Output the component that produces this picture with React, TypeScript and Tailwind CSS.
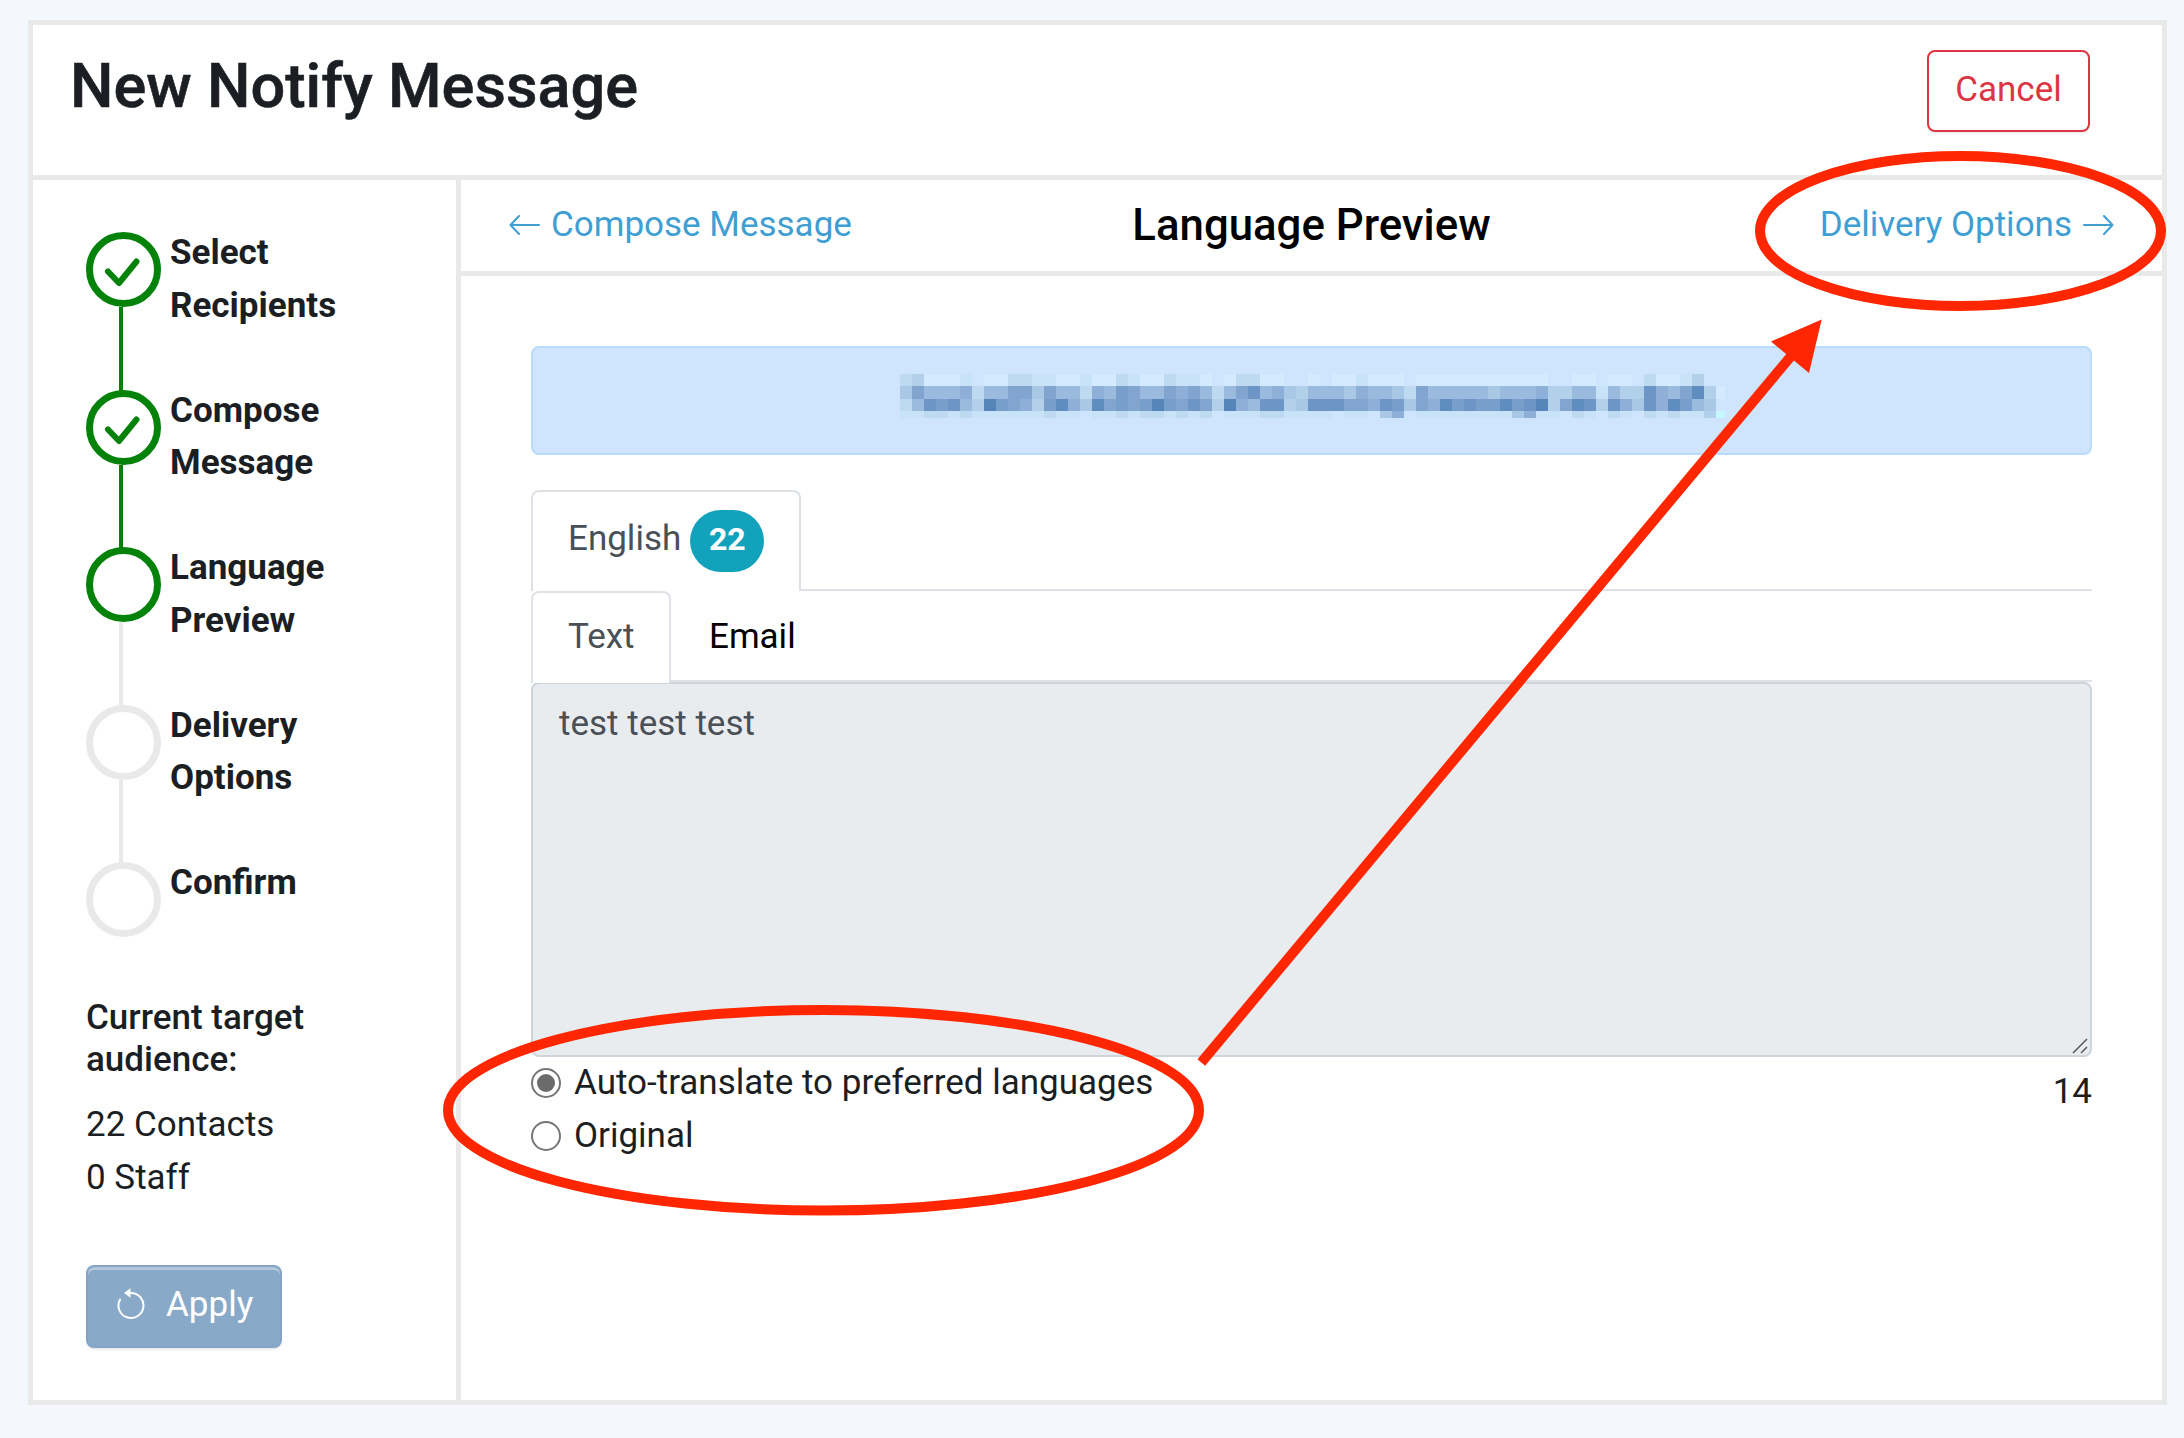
import { Fragment } from "react"

interface Step {
    id: number
    lines: string[]
    status: "done" | "current" | "pending"
}

const steps: Step[] = [
    { id: 1, lines: ["Select", "Recipients"], status: "done" },
    { id: 2, lines: ["Compose", "Message"], status: "done" },
    { id: 3, lines: ["Language", "Preview"], status: "current" },
    { id: 4, lines: ["Delivery", "Options"], status: "pending" },
    { id: 5, lines: ["Confirm"], status: "pending" },
]

// Censored alert text, one character per mosaic block ("." is empty)
const mosaicRows = [
    { y: 0, height: 12.4, cells: "341112.1133221121132113221.13311..1.112111.11111111111..11.11.31124.." },
    { y: 12.4, height: 12.3, cells: "5866673668858663769866878636" + "8A6754" + "6665766538666665666744662644A768B41" },
    { y: 24.7, height: 12.3, cells: "36A9A64C98749B75B8989C98A84C76AA45" + "AAA887A9587B9A99B9AC48BA4A75A7B965." },
    { y: 37, height: 7, cells: "223323222222322.22323323" + "23.2223322" + "22.22.57.222222225722.32.32.323224D" },
]

const mosaicColors: Record<string, string> = {
    "1": "#d4ebff",
    "2": "#c8e2f8",
    "3": "#bddaf0",
    "4": "#b2d0ea",
    "5": "#a8c8e5",
    "6": "#9abade",
    "7": "#8eafd8",
    "8": "#82a5d0",
    "9": "#789fcb",
    A: "#6d96c6",
    B: "#608dc0",
    C: "#5686b9",
    D: "#c5f7ff",
}

const Mosaic = () => (
    <svg width="828" height="44" viewBox="0 0 828 44" shapeRendering="crispEdges">
        {mosaicRows.map((row) => (
            <Fragment key={row.y}>
                {row.cells.split("").map((cell, i) =>
                    cell === "." ? null : (
                        <rect
                            key={i}
                            x={i * 12}
                            y={row.y}
                            width={i === 68 ? 9 : 12}
                            height={row.height}
                            fill={mosaicColors[cell]}
                        />
                    )
                )}
            </Fragment>
        ))}
    </svg>
)

const StepItem = ({ step, last }: { step: Step; last: boolean }) => (
    <li className={`flex gap-[9px] ${last ? "h-[105px]" : "h-[157.5px]"}`}>
        <div className="flex flex-col w-[75px] pt-[5px]">
            <div
                className={`w-[75px] h-[75px] shrink-0 rounded-full border-[7px] flex items-center justify-center ${step.status === "pending" ? "border-[#e9e9e9]" : "border-[#04820a]"
                    }`}
            >
                {step.status === "done" && (
                    <svg width="61" height="61" viewBox="0 0 61 61" fill="none">
                        <path
                            d="M15 32.5 L26 44 L43.5 22.5"
                            stroke="#04820a"
                            strokeWidth="6"
                            strokeLinecap="round"
                            strokeLinejoin="round"
                        />
                    </svg>
                )}
            </div>
            {!last && (
                <div
                    className={`w-1 h-[84px] shrink-0 ml-[33px] ${step.status === "done" ? "bg-[#04820a]" : "bg-[#e9e9e9]"
                        }`}
                />
            )}
        </div>
        <div className="font-bold leading-[52.5px]">
            {step.lines.map((line) => (
                <div key={line}>{line}</div>
            ))}
        </div>
    </li>
)

const Sidebar = () => (
    <aside className="w-[428px] shrink-0 border-r-[5px] border-[#e9e9e9] pl-[53px] pt-[47px]">
        <ol>
            {steps.map((step, i) => (
                <StepItem key={step.id} step={step} last={i === steps.length - 1} />
            ))}
        </ol>

        {/* Audience */}
        <h2 className="mt-[35px] font-medium leading-[42px]">
            Current target
            <br />
            audience:
        </h2>
        <p className="mt-[18px] leading-[52.5px]">22 Contacts</p>
        <p className="leading-[52.5px]">0 Staff</p>

        <button className="mt-[61px] w-[196px] h-[83px] flex items-center pl-[29px] pb-[3px] rounded-lg border-2 border-[#85a4c5] bg-[#89a9c9] text-white shadow-[inset_0_3px_0_rgba(255,255,255,0.35),0_2px_2px_rgba(0,0,0,0.08)]">
            <svg className="mb-1" width="28" height="34" viewBox="0 0 28 34" fill="none">
                <path d="M3 13.5 A12.5 12.5 0 1 0 14 7" stroke="white" strokeWidth="2" strokeLinecap="round" />
                <path d="M7 7 L13.5 2.2 V11.8 Z" fill="white" />
            </svg>
            <span className="ml-[21px]">Apply</span>
        </button>
    </aside>
)

const Radio = ({ label, checked }: { label: string; checked?: boolean }) => (
    <label className="flex items-center gap-[13px] h-[53px]">
        <span className="w-[30px] h-[30px] rounded-full border-2 border-[#767676] bg-white flex items-center justify-center mb-px">
            {checked && <span className="w-[18px] h-[18px] rounded-full bg-[#6b6b6b]" />}
        </span>
        <span>{label}</span>
    </label>
)

const Content = () => (
    <main className="flex-1 flex flex-col">
        {/* Step navigation */}
        <nav className="h-24 shrink-0 border-b-[5px] border-[#e9e9e9] grid grid-cols-[1fr_auto_1fr] items-center pl-12 pr-12 text-[#3f9fd3]">
            <a className="flex items-center gap-[11px]">
                <svg className="mb-0.5" width="31" height="20" viewBox="0 0 31 20" fill="none" stroke="currentColor" strokeWidth="2" strokeLinecap="round" strokeLinejoin="round">
                    <path d="M30 10 H1.5 M10 1 L1.5 10 L10 19" />
                </svg>
                Compose Message
            </a>
            <h2 className="text-[43.75px] font-medium text-black">Language Preview</h2>
            <a className="flex items-center justify-end gap-[11px]">
                Delivery Options
                <svg className="mb-0.5" width="31" height="20" viewBox="0 0 31 20" fill="none" stroke="currentColor" strokeWidth="2" strokeLinecap="round" strokeLinejoin="round">
                    <path d="M1 10 H29.5 M21 1 L29.5 10 L21 19" />
                </svg>
            </a>
        </nav>

        <div className="px-[70px] pt-[70px]">
            {/* Alert */}
            <div className="h-[109px] rounded-lg border-2 border-[#b8dbff] bg-[#cee5fd] pt-[26px] pl-[367px]">
                <Mosaic />
            </div>

            {/* Language tabs */}
            <div className="mt-[35px] h-[101px] flex border-b-2 border-[#dee2e6]">
                <div className="w-[270px] h-[101px] rounded-t-lg border-2 border-b-0 border-[#dee2e6] bg-white flex items-start pt-[18px] pl-[35px] text-[#495057]">
                    <span className="mt-[3px]">English</span>
                    <span className="ml-[9px] w-[74px] h-[62px] rounded-[31px] bg-[#13a2bb] text-white text-[32px] font-bold text-center leading-[58px]">
                        22
                    </span>
                </div>
            </div>

            {/* Format tabs */}
            <div className="h-[91px] flex border-b-2 border-[#dee2e6]">
                <div className="w-[140px] h-[92px] z-10 rounded-t-lg border-2 border-b-0 border-[#dee2e6] bg-white pt-[18px] pl-[35px] text-[#495057]">
                    Text
                </div>
                <div className="pt-5 pl-[38px] text-black">Email</div>
            </div>

            <div className="h-[375px] rounded-lg border-2 border-[#ced4da] bg-[#e9ecef] flex flex-col justify-between">
                <p className="pt-[14px] pl-[26px] text-[#495057]">test test test</p>
                <svg className="self-end mr-0.5 mb-px" width="16" height="16" viewBox="0 0 16 16" stroke="#5c5f61" strokeWidth="1.6">
                    <path d="M1 15 L15 1 M9 15 L15 9" />
                </svg>
            </div>

            <div className="flex justify-between">
                <div>
                    <Radio label="Auto-translate to preferred languages" checked />
                    <Radio label="Original" />
                </div>
                <span className="mt-[9px]">14</span>
            </div>
        </div>
    </main>
)

// Red circles and arrow drawn over the page
const Annotations = () => (
    <svg className="absolute inset-0 z-20 pointer-events-none" width="2184" height="1438" viewBox="0 0 2184 1438" fill="none">
        <g stroke="#ff2600" strokeWidth="10">
            <ellipse cx="823.5" cy="1110.3" rx="375.5" ry="100.3" />
            <ellipse cx="1960.5" cy="231" rx="200.5" ry="75" />
            <path d="M1201.3 1062.5 L1792 355" />
        </g>
        <path d="M1821.7 319.5 L1771 341.5 L1809 373 Z" fill="#ff2600" />
    </svg>
)

export default function App() {
    return (
        <div className="relative w-[2184px] h-[1438px] bg-[#f4f8fc] pt-5 pl-7 font-['Roboto',sans-serif] text-[35px] leading-[52.5px] text-[#1b1f23] overflow-hidden">
            <div className="w-[2139px] h-[1385px] border-[5px] border-[#e9e9e9] bg-white flex flex-col">
                <header className="h-[155px] shrink-0 border-b-[5px] border-[#e9e9e9] flex justify-between items-start pl-[37px] pr-[72px] pt-[25px]">
                    <h1 className="text-[61.25px] leading-[72px] font-medium [-webkit-text-stroke:0.6px]">New Notify Message</h1>
                    <button className="w-[163px] h-[82px] pb-0.5 rounded-lg border-2 border-[#dc3545] text-[#dc3545] bg-white shadow-[0_2px_2px_rgba(0,0,0,0.06)]">
                        Cancel
                    </button>
                </header>
                <div className="flex flex-1">
                    <Sidebar />
                    <Content />
                </div>
            </div>
            <Annotations />
        </div>
    )
}
